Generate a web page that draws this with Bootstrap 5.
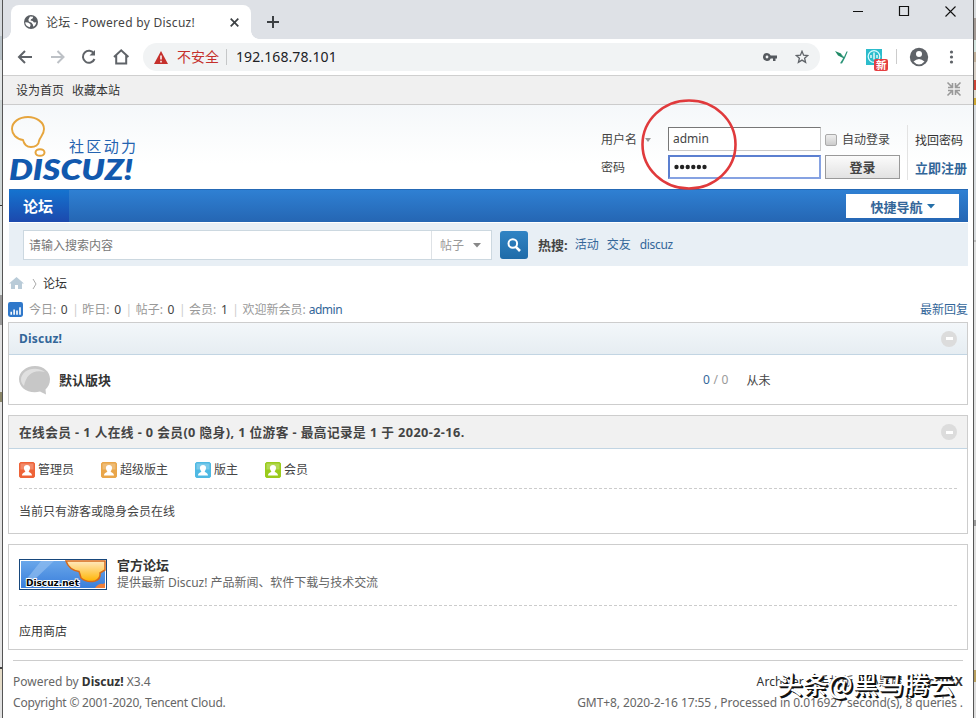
<!DOCTYPE html>
<html lang="zh-CN">
<head>
<meta charset="utf-8">
<meta name="viewport" content="width=device-width, initial-scale=1">
<title>论坛 - Powered by Discuz!</title>
<link href="https://cdn.jsdelivr.net/npm/bootstrap@5.3.0/dist/css/bootstrap.min.css" rel="stylesheet">
<style>
body{width:976px;height:718px;overflow:hidden;font:12px/18px "Noto Sans","Noto Sans CJK SC",sans-serif;color:#444;background:#fff}
svg{display:block;flex:none}
a{color:#369;text-decoration:none;white-space:nowrap}
span,b,label{white-space:nowrap}
b{font-weight:700}
.zb{font-size:13px}
.edge-l{width:3px;background:linear-gradient(#d5d9dd 0 36px,#b9c2c8 0 60px,#e3e6e7 0 100px,#cfd6d6 0 205px,#333 0 206px,#dfe4e4 0 295px,#999 0 325px,#e2e2e2 0 392px,#8b8668 0 402px,#e4e4e4 0 667px,#444 0 669px,#e5dcc8 0 690px,#e2e2e2 0);border-right:1px solid #555}
.edge-r{width:3px;background:linear-gradient(#d8dbdd 0 18px,#a39a95 0 40px,#d4e4df 0 52px,#bfae98 0 62px,#d7cfc6 0 80px,#cc4436 0 90px,#dfd9cf 0 98px,#cda631 0 105px,#d8dcdf 0 240px,#bbb 0 242px,#dfe0e0 0 520px,#999 0 526px,#e0e0e0 0 670px,#b8a060 0 682px,#ddd 0);border-left:1px solid #555}
.win{width:970px}
.tabbar{height:39px;background:#dee1e6}
.tab1{width:240px;height:34px;margin:5px 0 0 8px;background:#fff;border-radius:8px 8px 0 0;position:relative;padding:0 12px 0 13px}
.tab1::before,.tab1::after{content:"";position:absolute;bottom:0;width:8px;height:8px}
.tab1::before{left:-8px;background:radial-gradient(circle at 0 0,transparent 7.5px,#fff 8px)}
.tab1::after{right:-8px;background:radial-gradient(circle at 100% 0,transparent 7.5px,#fff 8px)}
.tool{height:37px;border-bottom:1px solid #cfcfcf;background:#fff}
.omni{width:677px;height:28px;border-radius:14px;background:#f1f3f4;font-size:14px}
.topbar{height:29px;background:#f0f0f0;border-bottom:1px solid #ccc;padding:1px 11px 0 13px;color:#333}
.hd{height:84px;background:linear-gradient(#f5f8fa,#fff 70%);padding:0 6px 0 6px}
.login-grid{grid-template-columns:68px 153px 79px;column-gap:4px;grid-template-rows:24px 24px;row-gap:4px;margin-top:22px;height:52px}
.fld{height:24px;border:1px solid #c9c9c9;border-top-color:#777;border-left-color:#777;background:#fff;padding-left:4px;line-height:22px}
.fld-on{border:2px solid #6a89d2;border-color:#5b7fd0 #86a2e2 #86a2e2 #5b7fd0;line-height:20px;padding-left:4px}
.loginbtn{height:24px;width:75px;border:1px solid #999;background:linear-gradient(#fbfbfb,#e2e2e2);font-weight:700;font-size:13px;color:#444;line-height:20px;padding:0}
.chk{width:12px;height:12px;border:1px solid #aaa;border-radius:2px;background:linear-gradient(#eee,#ccc)}
.links{border-left:1px solid #e3e3e3;padding-left:7px;height:55px;margin:20px 0 0 3px;width:60px}
.navi{height:33px;background:linear-gradient(#2f80d3,#2566b3);margin:0 5px 0 6px;border-top:1px solid #2569b5}
.navi-on{width:60px;background:linear-gradient(#1573cf,#1c49ad);color:#fff;font-size:15px;font-weight:700;padding-right:2px}
.quick{width:113px;height:24px;margin:4px 9px 0 0;background:#fff;color:#369;font-weight:700;font-size:13px}
.srch{height:43px;margin:1px 5px 0 6px;background:#e8eff5;padding-left:14px}
.sbox{width:469px;height:30px;border:1px solid #ccd8e0;background:#fff;color:#777}
.sbtn{width:28px;height:28px;border-radius:3px;background:linear-gradient(#3184c4,#1f6ba8);margin-left:8px}
.pg{margin:0 5px}
.stat{color:#999}.stat em{font-style:normal;color:#444;margin-left:1.5px}.stat i{font-style:normal;color:#ccc;margin:0 3.500px 0 4.500px}
.box{border:1px solid #cdcdcd}
.box-h{height:32px;border-bottom:1px solid #c2d5e3;padding:0 10px}
.box-h.blue{background:linear-gradient(#f3f7fa,#e6edf2)}
.box-h.gray{background:#f1f1f1;height:33px}
.mini{width:16px;height:16px;border-radius:50%;background:#dcdcdc}
.mini::after{content:"";width:7px;height:3px;background:#fff}
.dash{border-bottom:1px dashed #ccc;margin:0 10px}
.foot{border-top:1px solid #cdcdcd;margin:10px 10px 0 10px;color:#666}
.foot .cp{letter-spacing:-.2px}
.foot .gm{letter-spacing:-.09px}
.ring{position:absolute;left:639px;top:97px}
.wm{position:absolute;left:777px;top:668px;font:500 25.5px/30px "Noto Sans CJK SC",sans-serif;color:#fff;text-shadow:1px 1px 0 #111,2px 2px 0 #111;white-space:nowrap}
</style>
<script src="https://cdn.jsdelivr.net/npm/bootstrap@5.3.0/dist/js/bootstrap.bundle.min.js"></script>
</head>
<body class="d-flex position-relative">
<div class="edge-l"></div>
<div class="win d-flex flex-column">
  <div class="tabbar d-flex">
    <div class="tab1 d-flex align-items-center">
      <svg width="14" height="14" viewBox="0 0 14 14"><circle cx="7" cy="7" r="7" fill="#5a5e63"/><path d="M1.200 7.200 4 7.600 6.300 9 6.600 10.200 5.800 12.200C3 11.600 1.200 9.600 1.200 7.200ZM6 1.600 9.200 1.800 8.600 3.600 7 4.200 6.600 5.600 8.600 6 10 7.600 12.300 7.200C12 9.200 11 10.800 9.400 11.700L8.800 9.400 7.600 7.800 4.800 6.400 4.400 4.600Z" fill="#fff"/></svg>
      <span style="letter-spacing:.28px;margin:2px 0 0 8px">论坛 - Powered by Discuz!</span>
      <svg class="ms-auto" width="9" height="9" viewBox="0 0 9 9"><path d="M.7.7l7.600 7.600M8.300.7.700 8.300" stroke="#3c4043" stroke-width="1.700"/></svg>
    </div>
    <svg class="ms-3" style="margin-top:16px" width="12" height="12"><path d="M6 0v12M0 6h12" stroke="#3c4043" stroke-width="2"/></svg>
    <svg class="ms-auto" style="margin:5px 15px 0 0" width="106" height="13"><path d="M1 6.500h10" stroke="#111"/><path d="M47.500 1.500h9v9h-9z" fill="none" stroke="#111" stroke-width="1.200"/><path d="M93.500 1.500l10 10M103.500 1.500l-10 10" stroke="#111" stroke-width="1.100"/></svg>
  </div>
  <div class="tool d-flex align-items-center">
    <svg width="140" height="36" fill="none" stroke="#5f6368" stroke-width="2"><path d="M29 18H16.500M22 12l-6 6 6 6"/><path d="M48 18h12M54.500 12l6 6-6 6" stroke="#bdc1c6"/><path d="M91 14.500A6 6 0 1 0 91.500 20"/><path d="M92 11v5.500h-5.500z" fill="#5f6368" stroke="none"/><path d="M111 18l7.200-6.700 7.200 6.700M113.200 16.500V24.500h10V16.500"/></svg>
    <div class="omni d-flex align-items-center">
      <svg style="margin-left:11px" width="14" height="13"><path d="M7 0l7 13H0z" fill="#c5302c"/><path d="M7 4.500v4M7 9.800v1.600" stroke="#fff" stroke-width="1.500"/></svg>
      <span style="color:#c5302c;margin-left:9px">不安全</span>
      <span class="vr" style="margin:6px 9px 6px 7px;width:1px"></span>
      <span style="color:#202124;letter-spacing:.1px">192.168.78.101</span>
      <svg class="ms-auto" width="14" height="10" viewBox="0 0 14 10"><path fill-rule="evenodd" d="M4 1a4 4 0 1 0 3.700 5.500H10V9h2.500V6.500H14v-3H7.700A4 4 0 0 0 4 1Zm0 2.600a1.400 1.400 0 1 1 0 2.800 1.400 1.400 0 0 1 0-2.800Z" fill="#55595e"/></svg>
      <svg style="margin:0 11px 0 18px" width="14" height="14" viewBox="0 0 14 14"><path d="M7 1.300 8.600 5.200l4.200.3-3.200 2.700 1 4.100L7 10.100l-3.600 2.200 1-4.100L1.200 5.500l4.200-.3z" fill="none" stroke="#5f6368" stroke-width="1.300"/></svg>
    </div>
    <svg style="margin-left:1px" width="150" height="36"><path d="M14 12l6 2.500 2 4.500-5-2.500z" fill="#208a66"/><path d="M20 15l3 3 2.500-5.500h1.200L24 19l-3 5.500-2-.3 3-4.700z" fill="#2b9478"/><rect x="45" y="10" width="16" height="16" fill="#2cbccc"/><circle cx="53" cy="17.500" r="5.800" fill="none" stroke="#d8fbff" stroke-width="1.300"/><path d="M50 16v3M53 13.500v7M56 16v3" stroke="#fff" stroke-width="1.300"/><rect x="53" y="20" width="14" height="12" rx="2" fill="#e53f42"/><text x="55" y="30" font-size="10.500" font-weight="700" fill="#fff" font-family="Noto Sans CJK SC">新</text><path d="M75.500 10v15" stroke="#ccc"/><circle cx="98" cy="18" r="9.200" fill="#5f6368"/><circle cx="98" cy="15" r="3" fill="#fff"/><path d="M92.500 22.500q5.500-5 11 0-2.500 3-5.500 3t-5.500-3" fill="#fff"/><g fill="#5f6368"><circle cx="130.500" cy="13" r="1.600"/><circle cx="130.500" cy="18" r="1.600"/><circle cx="130.500" cy="23" r="1.600"/></g></svg>
  </div>
  <div class="topbar d-flex align-items-center">
    <span>设为首页</span><span class="ms-2">收藏本站</span>
    <svg class="ms-auto" style="margin-top:-3px" width="16" height="16" fill="none" stroke="#999" stroke-width="1.600"><path d="M1.500 1.500l4 4M14.500 1.500l-4 4M1.500 14.500l4-4M14.500 14.500l-4-4M6.500 2v4.500H2M9.500 2v4.500H14M6.500 14V9.500H2M9.500 14V9.500H14"/></svg>
  </div>
  <div class="hd d-flex">
    <svg width="132" height="82" viewBox="0 0 132 82"><path d="M19 12C27 12 35 17 35 24 35 30 31 32 30 36 30 40 26 42 22 42 17 42 15 39 14 35 7 34 3 29 3 24 3 17 10 12 19 12Z" fill="none" stroke="#e6a53d" stroke-width="1.900"/><ellipse cx="31" cy="47.500" rx="4.500" ry="3.300" fill="#fff" stroke="#e6a53d" stroke-width="2"/><text x="60" y="47" font-size="15" fill="#2463b0" textLength="67" font-family="Noto Sans CJK SC">社区动力</text><text x="0" y="75" font-size="28.500" font-weight="800" font-style="italic" fill="#1259ae" textLength="124" lengthAdjust="spacingAndGlyphs" font-family="Lato">DISCUZ!</text></svg>
    <div class="login-grid d-grid ms-auto align-items-center">
      <label style="padding:1px 0 0 5px" class="d-flex align-items-center">用户名<svg class="ms-2" width="6" height="4"><path d="M0 0h6L3 4z" fill="#999"/></svg></label>
      <div class="fld">admin</div>
      <div class="d-flex align-items-center" style="padding-top:2px"><span class="chk"></span><span style="margin-left:5px">自动登录</span></div>
      <label style="padding:2px 0 0 5px">密码</label>
      <div class="fld fld-on"><svg width="36" height="20" fill="#222"><circle cx="2.500" cy="10" r="2.200"/><circle cx="8.100" cy="10" r="2.200"/><circle cx="13.700" cy="10" r="2.200"/><circle cx="19.300" cy="10" r="2.200"/><circle cx="24.900" cy="10" r="2.200"/><circle cx="30.500" cy="10" r="2.200"/></svg></div>
      <button class="loginbtn" type="button">登录</button>
    </div>
    <div class="links d-flex flex-column"><span style="margin-top:7px;color:#333">找回密码</span><a href="#" class="fw-bold zb" style="margin-top:9px">立即注册</a></div>
  </div>
  <div class="navi d-flex">
    <div class="navi-on d-flex align-items-center justify-content-center">论坛</div>
    <div class="quick ms-auto d-flex align-items-center justify-content-center"><span style="padding-top:1px">快捷导航</span><svg class="ms-1" width="8" height="5"><path d="M0 0h8L4 4.500z" fill="#246fa8"/></svg></div>
  </div>
  <div class="srch d-flex align-items-center">
    <div class="sbox d-flex align-items-center"><span style="padding:3px 0 0 5px">请输入搜索内容</span><div class="ms-auto h-100 d-flex align-items-center border-start" style="width:60px;padding:2px 0 0 8px;color:#999">帖子<svg style="margin-left:9px" width="8" height="5"><path d="M0 0h8L4 4.500z" fill="#888"/></svg></div></div>
    <div class="sbtn d-flex align-items-center justify-content-center"><svg width="14" height="14" fill="none" stroke="#fff"><circle cx="5.800" cy="5.500" r="4.300" stroke-width="2"/><path d="M8.800 8.800l4.200 4.200" stroke-width="2.600"/></svg></div>
    <b class="zb" style="margin-left:10px">热搜:</b><a href="#" style="margin-left:7px">活动</a><a href="#" class="ms-2">交友</a><a href="#" style="margin-left:9px;letter-spacing:-.3px">discuz</a>
  </div>
  <div class="pg d-flex align-items-center" style="height:35px">
    <svg width="15" height="13" style="margin-left:1px"><path d="M7.500 0L15 6.500h-2V12H9V8H6v4H2V6.500H0z" fill="#b9cbd8"/></svg>
    <svg style="margin:0 8px 0 8px" width="5" height="10" fill="none" stroke="#aaa"><path d="M1 0l3 5-3 5"/></svg><span style="color:#333;margin-left:-2px">论坛</span>
  </div>
  <div class="pg stat d-flex align-items-center" style="height:21px">
    <svg width="15" height="15" viewBox="0 0 14 14" style="margin-top:-5px"><rect width="14" height="14" rx="2" fill="#2f78ca"/><path d="M3 12V9M5.700 12V7M8.400 12V8M11.200 12V5" stroke="#fff" stroke-width="1.500"/></svg>
    <div style="margin:-4px 0 0 6px" class="d-flex"><span>今日: <em>0</em></span><i>|</i><span>昨日: <em>0</em></span><i>|</i><span>帖子: <em>0</em></span><i>|</i><span>会员: <em>1</em></span><i>|</i><span>欢迎新会员: <a href="#" style="letter-spacing:-.5px">admin</a></span></div>
    <a href="#" class="ms-auto" style="margin-top:-4px">最新回复</a>
  </div>
  <div class="pg box" style="height:83px">
    <div class="box-h blue d-flex align-items-center"><a href="#" class="fw-bold" style="letter-spacing:.2px">Discuz!</a><span class="mini ms-auto d-flex align-items-center justify-content-center"></span></div>
    <div class="d-flex align-items-center" style="height:50px;padding-left:10px">
      <svg width="32" height="29" viewBox="0 0 32 29"><path d="M16 0C25 0 31 6 31 13 31 18 29 21 26.500 23.500L27 28.500 21 25.600C9 28 0 22 0 13 0 6 7 0 16 0Z" fill="#c7c7c7"/><path d="M2 14C2 4 16-1 26 6 14 3 7 9 5 20 3 18 2 16 2 14Z" fill="#e0e0e0"/></svg>
      <b class="zb" style="margin-left:8px;width:644px;color:#333">默认版块</b><span style="color:#999;letter-spacing:.2px"><a href="#">0</a> / 0</span><span style="margin-left:18px;padding-top:1px">从未</span>
    </div>
  </div>
  <div class="pg box" style="height:119px;margin-top:10px">
    <div class="box-h gray d-flex align-items-center"><b style="font-size:12.700px;letter-spacing:.41px">在线会员 - 1 人在线 - 0 会员(0 隐身), 1 位游客 - 最高记录是 1 于 2020-2-16.</b><span class="mini ms-auto d-flex align-items-center justify-content-center"></span></div>
    <div class="dash d-flex align-items-center" style="height:40px;padding-top:2px">
      <svg width="16" height="16"><use href="#usr" color="#ee6338"/></svg><span style="margin:0 27px 0 3px">管理员</span>
      <svg width="16" height="16"><use href="#usr" color="#e9a64a"/></svg><span style="margin:0 27px 0 3px">超级版主</span>
      <svg width="16" height="16"><use href="#usr" color="#4fb9e3"/></svg><span style="margin:0 27px 0 3px">版主</span>
      <svg width="16" height="16"><use href="#usr" color="#9acb1c"/></svg><span style="margin-left:3px">会员</span>
    </div>
    <div class="d-flex align-items-center" style="height:44px;padding:1px 0 0 10px">当前只有游客或隐身会员在线</div>
  </div>
  <div class="pg box" style="height:106px;margin-top:10px">
    <div class="dash d-flex" style="height:61px;padding-top:14px">
      <svg width="88" height="31"><defs><linearGradient id="bg1" x2="0" y2="1"><stop stop-color="#69a7ea"/><stop offset="1" stop-color="#3a7edb"/></linearGradient><linearGradient id="or" x2="0" y2="1"><stop stop-color="#ffe9c0"/><stop offset="1" stop-color="#ffb400"/></linearGradient></defs><rect x=".5" y=".5" width="87" height="30" fill="#fff" stroke="#17477c"/><rect x="2" y="2" width="84" height="27" fill="url(#bg1)"/><path d="M22 2h13L14 22H6z" fill="#8fbcf0" opacity=".7"/><path d="M47 2Q50 11 60 12.500 61 15 62 19 68 24 76 22 82 20 81 14L86 11V2Z" fill="url(#or)" stroke="#d56a1c" stroke-width="1.500"/><path d="M76 29q4-5 8-4l2-1v5z" fill="#f0803a"/><text x="7" y="27" font-family="DejaVu Sans" font-size="9.500" font-weight="700" textLength="53" lengthAdjust="spacingAndGlyphs" stroke="#fff" stroke-width="2" paint-order="stroke">Discuz.net</text></svg>
      <div style="margin:-3px 0 0 10px"><b class="zb d-block" style="color:#333">官方论坛</b><span class="d-block" style="color:#666;letter-spacing:-.03px">提供最新 Discuz! 产品新闻、软件下载与技术交流</span></div>
    </div>
    <div class="d-flex align-items-center" style="height:50px;padding:2px 0 0 10px;color:#333">应用商店</div>
  </div>
  <div class="foot">
    <div class="d-flex justify-content-between" style="margin-top:12px"><span>Powered by <b style="color:#333">Discuz!</b> X3.4</span><span style="color:#333;letter-spacing:.1px">Archiver | 手机版 | 小黑屋 | <b>DiscuzX</b></span></div>
    <div class="d-flex justify-content-between" style="margin-top:3px"><span class="cp">Copyright © 2001-2020, Tencent Cloud.</span><span class="gm">GMT+8, 2020-2-16 17:55 , Processed in 0.016927 second(s), 8 queries .</span></div>
  </div>
</div>
<div class="edge-r"></div>
<svg class="position-absolute" width="0" height="0"><defs><symbol id="usr" viewBox="0 0 16 16"><rect x=".5" y=".5" width="15" height="15" rx="1.500" fill="currentColor" stroke="currentColor"/><rect x="1.500" y="1.500" width="13" height="6" fill="#fff" opacity=".25"/><path d="M8 3c4 0 3.500 4.500 1.700 6.200 0 1.300 3.300 1.300 3.300 4.300H3c0-3 3.300-3 3.300-4.300C4.500 7.500 4 3 8 3z" fill="#fff"/></symbol></defs></svg>
<svg class="ring" width="100" height="95"><ellipse cx="50" cy="47.500" rx="46.500" ry="44" fill="none" stroke="#e03a3c" stroke-width="2.600"/></svg>
<div class="wm">头条@黑马腾云</div>
</body>
</html>
